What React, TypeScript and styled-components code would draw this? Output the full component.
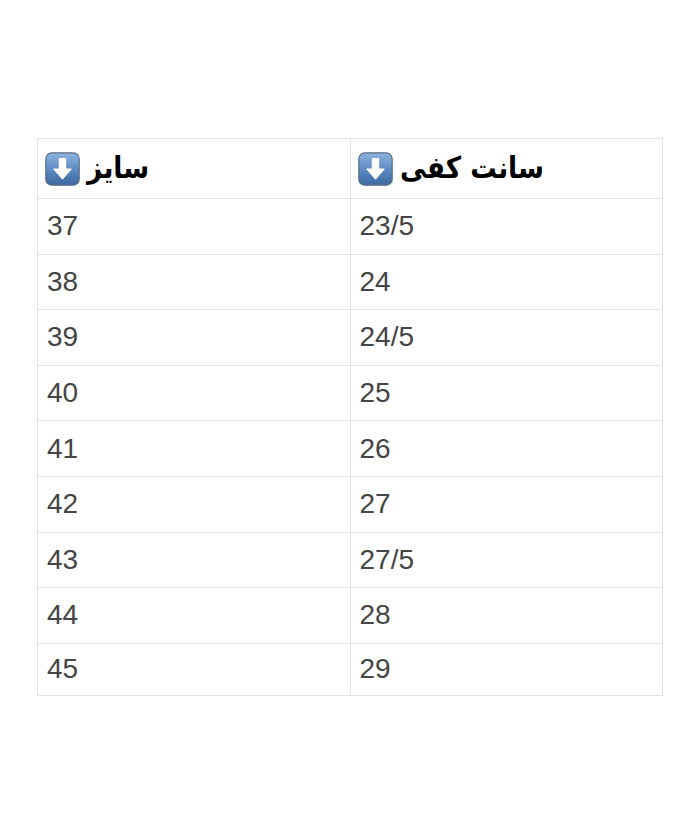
import React from "react";
import styled, { createGlobalStyle } from "styled-components";

const Global = createGlobalStyle`
  html, body { margin: 0; padding: 0; background: #ffffff; }
  body { font-family: "Liberation Sans", Arial, sans-serif; }
`;

const Page = styled.div`
  width: 700px;
  height: 839px;
  padding: 138px 37px 0 37px;
  box-sizing: border-box;
`;

const Table = styled.table`
  width: 626px;
  border-collapse: collapse;
  table-layout: fixed;
  border: 1px solid #e2e2e2;
`;

const HeadCell = styled.th`
  height: 60px;
  padding: 0 0 0 7px;
  border: 1px solid #e2e2e2;
  text-align: left;
  vertical-align: middle;
  box-sizing: border-box;
`;

const HeadInner = styled.div`
  display: flex;
  align-items: center;
  gap: 7px;
`;

const HeadText = styled.span`
  display: inline-block;
  font-family: "DejaVu Sans", "Noto Sans", sans-serif;
  font-weight: 700;
  font-size: 30px;
  color: #000;
  direction: rtl;
  line-height: 1;
  position: relative;
  top: -1px;
  transform: scaleX(0.88);
  transform-origin: left center;
`;

const Cell = styled.td<{ $last?: boolean }>`
  height: ${(p) => (p.$last ? "52px" : "55.6px")};
  padding: 0 0 0 9px;
  border: 1px solid #e2e2e2;
  font-family: "Liberation Sans", Arial, sans-serif;
  font-size: 28px;
  color: #454545;
  vertical-align: middle;
  box-sizing: border-box;
`;

const Emoji = styled.svg`
  width: 35px;
  height: 34px;
  flex: none;
`;

const DownEmoji = ({ id }: { id: string }) => (
  <Emoji viewBox="0 0 35 34">
    <defs>
      <linearGradient id={id} x1="0" y1="0" x2="0" y2="1">
        <stop offset="0" stopColor="#8fb4de" />
        <stop offset="0.5" stopColor="#5f8cc4" />
        <stop offset="1" stopColor="#3c679f" />
      </linearGradient>
    </defs>
    <rect x="0.8" y="0.8" width="33.4" height="32.4" rx="6" fill={`url(#${id})`} stroke="#5a6f88" strokeWidth="1.2" />
    <path
      d="M14.3 6.5 h6.4 v10.5 h5.6 l-8.8 10.2 l-8.8 -10.2 h5.6 z"
      fill="#ffffff"
      stroke="#ffffff"
      strokeWidth="1"
      strokeLinejoin="round"
    />
  </Emoji>
);

const rows: [string, string][] = [
  ["37", "23/5"],
  ["38", "24"],
  ["39", "24/5"],
  ["40", "25"],
  ["41", "26"],
  ["42", "27"],
  ["43", "27/5"],
  ["44", "28"],
  ["45", "29"],
];

export default function App() {
  return (
    <>
      <Global />
      <Page>
        <Table>
          <thead>
            <tr>
              <HeadCell>
                <HeadInner>
                  <DownEmoji id="g1" />
                  <HeadText>سایز</HeadText>
                </HeadInner>
              </HeadCell>
              <HeadCell>
                <HeadInner>
                  <DownEmoji id="g2" />
                  <HeadText>سانت کفی</HeadText>
                </HeadInner>
              </HeadCell>
            </tr>
          </thead>
          <tbody>
            {rows.map(([a, b], i) => {
              const last = i === rows.length - 1;
              return (
                <tr key={a}>
                  <Cell $last={last}>{a}</Cell>
                  <Cell $last={last}>{b}</Cell>
                </tr>
              );
            })}
          </tbody>
        </Table>
      </Page>
    </>
  );
}
